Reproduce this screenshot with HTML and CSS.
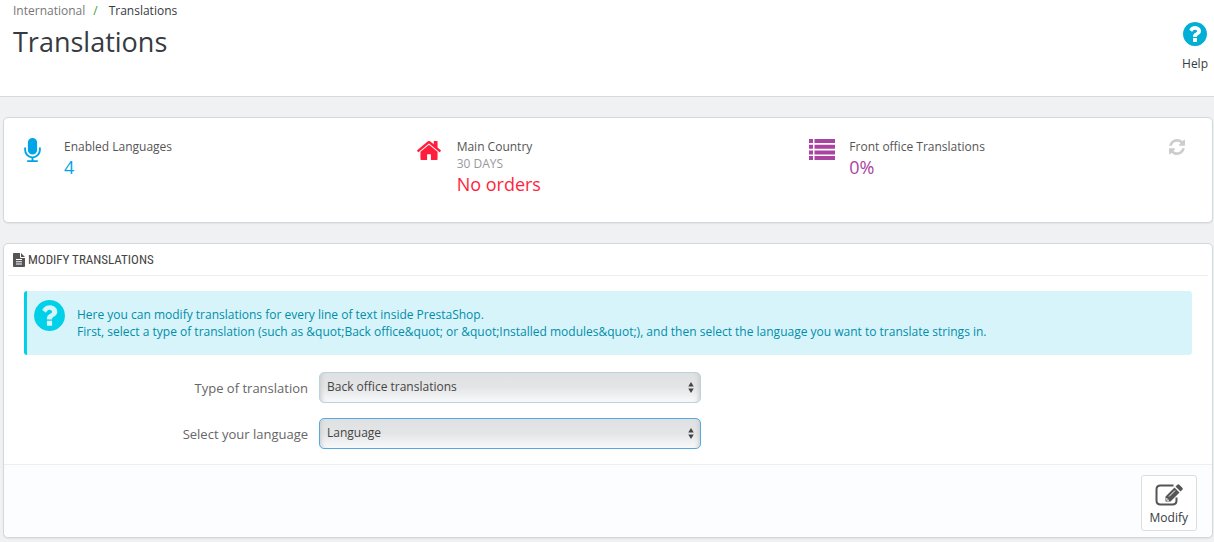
FILE: index.html
```html
<!DOCTYPE html>
<html lang="en">
<head>
<meta charset="utf-8">
<title>Translations</title>
<link rel="stylesheet" href="styles.css">
</head>
<body>
<svg class="sprite" aria-hidden="true">
  <symbol id="question" viewBox="128 128 1536 1536"><path d="M1024 1376v-192q0-14-9-23t-23-9h-192q-14 0-23 9t-9 23v192q0 14 9 23t23 9h192q14 0 23-9t9-23zm256-672q0-88-55.5-163t-138.5-116-170-41q-243 0-371 213-15 24 8 42l132 100q7 6 19 6 16 0 25-12 53-68 86-92 34-24 86-24 48 0 85.500 26t37.500 59q0 38-20 61t-68 45q-63 28-115.500 86.500t-52.500 125.500v36q0 14 9 23t23 9h192q14 0 23-9t9-23q0-19 21.500-49.500t54.500-49.500q32-18 49-28.500t46-35 44.500-48 28-60.500 12.500-81zm384 192q0 209-103 385.500t-279.500 279.500-385.500 103-385.500-103-279.500-279.500-103-385.500 103-385.500 279.500-279.500 385.500-103 385.500 103 279.500 279.500 103 385.500z"/></symbol>
  <symbol id="arrows" viewBox="0 0 6 12"><path d="M3 0L6 5H0zM3 12L0 7h6z"/></symbol>
</svg>
<header class="page-head">
  <div>
    <nav class="breadcrumb" aria-label="Breadcrumb">
      <a href="#" class="crumb-parent">International</a><span class="crumb-sep">/</span><a href="#" class="crumb-current">Translations</a>
    </nav>
    <h1 class="page-title">Translations</h1>
  </div>
  <a href="#" class="help">
    <svg class="help-icon" aria-hidden="true"><use href="#question"/></svg>
    <span>Help</span>
  </a>
</header>
<main class="content">
  <section class="panel kpis">
    <div class="kpi kpi-blue">
      <div class="kpi-icon"><svg class="icon-mic" viewBox="320 0 1152 1664" aria-hidden="true"><path d="M1472 704v128q0 221-147.500 384.500t-364.500 187.500v132h256q26 0 45 19t19 45-19 45-45 19h-640q-26 0-45-19t-19-45 19-45 45-19h256v-132q-217-24-364.500-187.500t-147.500-384.500v-128q0-26 19-45t45-19 45 19 19 45v128q0 185 131.500 316.500t316.500 131.500 316.500-131.500 131.500-316.500v-128q0-26 19-45t45-19 45 19 19 45zm-256-384v512q0 132-94 226t-226 94-226-94-94-226v-512q0-132 94-226t226-94 226 94 94 226z"/></svg></div>
      <div><div class="kpi-title">Enabled Languages</div><div class="kpi-value">4</div></div>
    </div>
    <div class="kpi kpi-red">
      <div class="kpi-icon"><svg class="icon-home" viewBox="89 256 1614 1280" aria-hidden="true"><path d="M1472 992v480q0 26-19 45t-45 19h-384v-384h-256v384h-384q-26 0-45-19t-19-45v-480q0-1 .5-3t.5-3l575-474 575 474q1 2 1 6zm223-69l-62 74q-8 9-21 11h-3q-13 0-21-7l-692-577-692 577q-12 8-24 7-13-2-21-11l-62-74q-8-10-7-23.500t11-21.500l719-599q32-26 76-26t76 26l244 204v-195q0-14 9-23t23-9h192q14 0 23 9t9 23v408l219 182q10 8 11 21.500t-7 23.500z"/></svg></div>
      <div><div class="kpi-title">Main Country</div><div class="kpi-sub">30 DAYS</div><div class="kpi-value">No orders</div></div>
    </div>
    <div class="kpi kpi-purple">
      <div class="kpi-icon"><svg class="icon-list" viewBox="0 0 26 21" aria-hidden="true"><path d="M0 0h4v4H0zM5.500 0H26v4H5.500zM0 5.700h4v4H0zM5.500 5.700H26v4H5.500zM0 11.400h4v4H0zM5.500 11.400H26v4H5.500zM0 17h4v4H0zM5.500 17H26v4H5.500z"/></svg></div>
      <div><div class="kpi-title">Front office Translations</div><div class="kpi-value">0%</div></div>
      <button type="button" class="refresh" aria-label="Refresh"><svg class="icon-refresh" viewBox="128 128 1536 1536" aria-hidden="true"><path d="M1639 1056q0 5-1 7-64 268-268 434.500t-478 166.500q-146 0-282.500-55t-243.500-157l-129 129q-19 19-45 19t-45-19-19-45v-448q0-26 19-45t45-19h448q26 0 45 19t19 45-19 45l-137 137q71 66 161 102t187 36q134 0 250-65t186-179q11-17 53-117 8-23 30-23h192q13 0 22.500 9.500t9.500 22.500zm25-800v448q0 26-19 45t-45 19h-448q-26 0-45-19t-19-45 19-45l138-138q-148-137-349-137-134 0-250 65t-186 179q-11 17-53 117-8 23-30 23h-199q-13 0-22.500-9.500t-9.500-22.500v-7q65-268 270-434.500t480-166.500q146 0 284 55.500t245 156.500l130-129q19-19 45-19t45 19 19 45z"/></svg></button>
    </div>
  </section>
  <form class="panel">
    <h2 class="panel-heading">
      <svg class="icon-file" viewBox="0 0 12 14" aria-hidden="true"><path fill-rule="evenodd" d="M.8 0H7v4.200q0 .8.800.800H12v8.200q0 .8-.8.800H.8q-.8 0-.8-.8V.8Q0 0 .8 0zM8 0l4 4H8zM3 6v1h6V6zM3 8.300v1h6v-1zM3 10.600v1h6v-1z"/></svg>
      Modify translations
    </h2>
    <div class="panel-body">
      <div class="alert">
        <svg class="alert-icon" aria-hidden="true"><use href="#question"/></svg>
        <p class="alert-text">Here you can modify translations for every line of text inside PrestaShop.<br>First, select a type of translation (such as &amp;quot;Back office&amp;quot; or &amp;quot;Installed modules&amp;quot;), and then select the language you want to translate strings in.</p>
      </div>
      <div class="form-row">
        <label class="form-label" for="type">Type of translation</label>
        <div class="select-wrap">
          <select id="type" class="select"><option>Back office translations</option></select>
          <svg class="select-arrows" aria-hidden="true"><use href="#arrows"/></svg>
        </div>
      </div>
      <div class="form-row">
        <label class="form-label" for="language">Select your language</label>
        <div class="select-wrap">
          <select id="language" class="select select-active"><option>Language</option></select>
          <svg class="select-arrows" aria-hidden="true"><use href="#arrows"/></svg>
        </div>
      </div>
    </div>
    <footer class="panel-footer">
      <button type="submit" class="modify">
        <svg class="icon-edit" viewBox="0 0 28 22" aria-hidden="true"><path class="edit-box" d="M18.500 1.500H5.500q-4 0-4 4v11q0 4 4 4h12q4 0 4-4V13.500"/><path d="M10.500 12.500L19.500 3.500l5 5-9 9h-5zM20.500 2.500L22.300.700q1-1 2 0l3 3q1 1 0 2l-1.800 1.800z"/><path class="edit-detail" d="M14 12.500l6-6M11.800 14v2.200H14"/></svg>
        <span>Modify</span>
      </button>
    </footer>
  </form>
</main>
</body>
</html>
```

FILE: styles.css
```css
* {
  box-sizing: border-box;
}

body {
  margin: 0;
  background: #eff1f2;
  color: #363a41;
  font: 12px/17px "Open Sans", "Noto Sans", sans-serif;
}

svg {
  display: block;
  fill: currentColor;
}

a {
  color: inherit;
  text-decoration: none;
}

.sprite {
  display: none;
}

.page-head {
  display: flex;
  justify-content: space-between;
  min-height: 97px;
  padding: 2px 6px 0 13px;
  background: #fff;
  border-bottom: 1px solid #d8dadd;
}

.crumb-parent {
  color: #777;
}

.crumb-sep {
  margin: 0 11px 0 8px;
  color: #3a9e3a;
}

.page-title {
  margin: 4px 0 0;
  font-size: 27px;
  line-height: 38px;
  font-weight: 400;
}

.help {
  display: flex;
  flex-direction: column;
  align-items: center;
  gap: 9px;
  padding-top: 20px;
}

.help-icon {
  width: 24px;
  height: 24px;
  color: #00aed6;
}

.content {
  display: grid;
  gap: 20px;
  padding: 20px 1px 4px 3px;
}

.panel {
  background: #fff;
  border: 1px solid #d3d8db;
  border-radius: 5px;
  box-shadow: 0 1px 1px #e0e3e6;
}

.kpis {
  display: grid;
  grid-template-columns: repeat(3, 1fr);
  min-height: 106px;
  padding: 20px 10px 20px 20px;
}

.kpi {
  display: flex;
  align-items: flex-start;
}

.kpi-icon {
  width: 40px;
}

.kpi-title {
  color: #555;
}

.kpi-sub {
  color: #999;
}

.kpi-value {
  font-size: 18px;
  line-height: 25px;
}

.kpi-blue {
  color: #00a4e7;
}

.kpi-red {
  color: #ff1f3d;
}

.kpi-purple {
  color: #a944a0;
}

.icon-mic {
  width: 17px;
  height: 24px;
}

.icon-home {
  width: 24px;
  height: 19px;
  margin-top: 3px;
}

.icon-list {
  width: 26px;
  height: 21px;
  margin-top: 1px;
}

.refresh {
  margin-left: auto;
  padding: 1px 17px 0;
  border: 0;
  background: none;
  color: #ccc;
}

.icon-refresh {
  width: 16px;
  height: 16px;
}

.panel-heading {
  display: flex;
  align-items: center;
  gap: 3px;
  margin: 0 4px;
  padding: 0 5px;
  border-bottom: 1px solid #eee;
  color: #444;
  font: 400 13px/31px "Ubuntu Condensed", "Roboto Condensed", "Open Sans", sans-serif;
  text-transform: uppercase;
}

.icon-file {
  width: 12px;
  height: 14px;
  color: #555;
}

.panel-body {
  display: grid;
  gap: 15px;
  padding: 15px 20px;
}

.alert {
  display: flex;
  gap: 12px;
  min-height: 64px;
  margin-bottom: 2px;
  padding: 9px 7px;
  border-left: 3px solid #00d0e8;
  border-radius: 3px;
  background: #d8f4fb;
  color: #008ea8;
}

.alert-icon {
  flex: none;
  width: 31px;
  height: 31px;
  color: #00d0e8;
}

.alert-text {
  margin: 6px 0 0;
}

.form-row {
  display: grid;
  grid-template-columns: 284fr 382fr 480fr;
  column-gap: 11px;
  align-items: center;
}

.form-label {
  padding-top: 2px;
  color: #666;
  font-size: 13px;
  text-align: right;
}

.select-wrap {
  position: relative;
}

.select {
  display: block;
  width: 100%;
  height: 31px;
  padding: 0 24px 2px 7px;
  appearance: none;
  border: 1px solid #bdd3dc;
  border-radius: 5px;
  background: linear-gradient(#dfe0e1, #e4e5e6 50%, #f8f9fa);
  box-shadow: inset 5px 0 4px -4px #c6c9cb, inset -5px 0 4px -4px #c6c9cb;
  color: #444;
  font: inherit;
}

.select-active {
  border-color: #58a8e2;
}

.select-arrows {
  position: absolute;
  top: 10px;
  right: 7px;
  width: 6px;
  height: 11px;
  color: #444;
  pointer-events: none;
}

.panel-footer {
  display: flex;
  justify-content: flex-end;
  padding: 10px 15px 6px;
  border-top: 1px solid #eee;
  border-radius: 0 0 5px 5px;
  background: #fcfdfe;
}

.modify {
  display: flex;
  flex-direction: column;
  align-items: center;
  gap: 3px;
  padding: 8px 8px 4px;
  border: 1px solid #ddd;
  border-radius: 3px;
  background: #fff;
  color: #363a41;
  font: inherit;
}

.icon-edit {
  width: 28px;
  height: 22px;
  color: #555;
}

.edit-box {
  fill: none;
  stroke: currentColor;
  stroke-width: 2;
}

.edit-detail {
  fill: none;
  stroke: #fff;
  stroke-width: 1;
}
```
